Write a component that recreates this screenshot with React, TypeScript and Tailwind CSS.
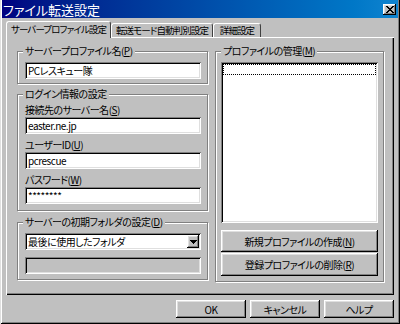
const font = "font-['Noto_Sans_CJK_JP','Noto_Sans',sans-serif] [font-feature-settings:'palt']"
const raised =
  "bg-[#c0c0c0] shadow-[inset_-1px_-1px_#000,inset_1px_1px_#fff,inset_-2px_-2px_#808080,inset_2px_2px_#dfdfdf]"
const sunken =
  "shadow-[inset_1px_1px_#808080,inset_-1px_-1px_#fff,inset_2px_2px_#000,inset_-2px_-2px_#dfdfdf]"
const group = "border border-[#808080] shadow-[inset_1px_1px_#fff,1px_1px_#fff] min-w-0"
const legend = "ml-[5px] px-[2px] h-[14px] leading-[14px] bg-[#c0c0c0] whitespace-nowrap"

function Key({ k }: { k: string }) {
  return (
    <>
      (<span className="underline underline-offset-1">{k}</span>)
    </>
  )
}

function Field({ value }: { value: string }) {
  return (
    <div className={`h-[17px] w-full bg-white pl-[3px] pt-[1px] flex items-center ${sunken}`}>
      <span className="leading-none">{value}</span>
    </div>
  )
}

function Tab({ label, selected, w }: { label: string; selected?: boolean; w: string }) {
  return (
    <div
      className={`${w} flex items-center justify-center bg-[#c0c0c0] border-t border-l border-white border-r border-r-[#404040] rounded-t-[3px] whitespace-nowrap ${
        selected ? "relative z-10 h-[17px] -mb-px" : "h-[14px]"
      }`}
    >
      <span className="leading-none text-[9.5px] tracking-[-0.9px]">{label}</span>
    </div>
  )
}

export default function App() {
  return (
    <div
      className={`w-[400px] h-[324px] bg-[#c0c0c0] px-[2px] flex flex-col text-black text-[10px] tracking-[-0.5px] ${font} shadow-[inset_1px_0_#dfdfdf,inset_-1px_-1px_#000,inset_2px_0_#fff,inset_-2px_-2px_#808080]`}
    >
      {/* Title bar */}
      <div className="h-[18px] shrink-0 flex items-center justify-between pl-[1px] pr-[2px] bg-gradient-to-r from-[#000080] to-[#1084d0]">
        <span className="text-white text-[13px] tracking-normal leading-none">ファイル転送設定</span>
        <div className={`w-[13px] h-[11px] flex items-center justify-center ${raised}`}>
          <svg width="8" height="7" viewBox="0 0 8 7" shapeRendering="crispEdges">
            <path d="M0 0h2v1h1v1h2V1h1V0h2v1H7v1H6v1H5v1h1v1h1v1h1v1H6V6H5V5H3v1H2v1H0V6h1V5h1V4h1V3H2V2H1V1H0z" fill="#000" />
          </svg>
        </div>
      </div>

      {/* Tabs */}
      <div className="mt-[3px] ml-[4px] flex items-end h-[16px]">
        <Tab label="サーバープロファイル設定" selected w="w-[105px]" />
        <Tab label="転送モード自動判別設定" w="w-[102px]" />
        <Tab label="詳細設定" w="w-[48px]" />
      </div>

      {/* Tab panel */}
      <div
        className={`ml-[4px] w-[388px] h-[258px] shrink-0 bg-[#c0c0c0] pt-[7px] pl-[11px] pr-[10px] flex gap-[7px] items-start shadow-[inset_1px_1px_#fff,inset_-1px_-1px_#000,inset_-2px_-2px_#808080]`}
      >
        {/* Left column */}
        <div className="w-[191px] flex flex-col">
          <fieldset className={group}>
            <legend className={legend}>
              サーバープロファイル名<Key k="P" />
            </legend>
            <div className="pl-[7px] pr-[6px] pt-[4px] pb-[4px]">
              <Field value="PCレスキュー隊" />
            </div>
          </fieldset>

          <fieldset className={`${group} mt-[3px]`}>
            <legend className={legend}>ログイン情報の設定</legend>
            <div className="pl-[7px] pr-[6px] pb-[6px] flex flex-col">
              <div className="h-[16px] flex items-center">
                接続先のサーバー名<Key k="S" />
              </div>
              <Field value="easter.ne.jp" />
              <div className="h-[16px] mt-[2px] flex items-center">
                ユーザーID<Key k="U" />
              </div>
              <Field value="pcrescue" />
              <div className="h-[16px] mt-[2px] flex items-center">
                パスワード<Key k="W" />
              </div>
              <Field value="********" />
            </div>
          </fieldset>

          <fieldset className={`${group} mt-[4px]`}>
            <legend className={legend}>
              サーバーの初期フォルダの設定<Key k="D" />
            </legend>
            <div className="pl-[7px] pr-[6px] pt-[4px] pb-[5px] flex flex-col">
              <div className={`h-[17px] bg-white flex items-center pl-[3px] pr-[2px] ${sunken}`}>
                <span className="flex-1 leading-none">最後に使用したフォルダ</span>
                <div className={`w-[12px] h-[13px] flex items-center justify-center ${raised}`}>
                  <svg width="7" height="4" viewBox="0 0 7 4" shapeRendering="crispEdges">
                    <path d="M0 0h7v1H6v1H5v1H4v1H3V3H2V2H1V1H0z" fill="#000" />
                  </svg>
                </div>
              </div>
              <div className={`h-[17px] mt-[7px] bg-[#c0c0c0] ${sunken}`} />
            </div>
          </fieldset>
        </div>

        {/* Right column */}
        <fieldset className={`${group} w-[169px]`}>
          <legend className={legend}>
            プロファイルの管理<Key k="M" />
          </legend>
          <div className="pl-[5px] pr-[5px] pt-[4px] pb-[5px] flex flex-col">
            <div className={`h-[161px] bg-white p-[2px] ${sunken}`}>
              <div className="h-[11px] border border-dotted border-black" />
            </div>
            <button className={`h-[22px] mt-[7px] flex items-center justify-center ${raised}`}>
              新規プロファイルの作成<Key k="N" />
            </button>
            <button className={`h-[23px] mt-[1px] flex items-center justify-center ${raised}`}>
              登録プロファイルの削除<Key k="R" />
            </button>
          </div>
        </fieldset>
      </div>

      {/* Dialog buttons */}
      <div className="mt-[5px] mr-[4px] flex justify-end gap-[4px]">
        <button className={`w-[70px] h-[18px] flex items-center justify-center ${raised}`}>OK</button>
        <button className={`w-[70px] h-[18px] flex items-center justify-center ${raised}`}>キャンセル</button>
        <button className={`w-[70px] h-[18px] flex items-center justify-center ${raised}`}>ヘルプ</button>
      </div>
    </div>
  )
}
